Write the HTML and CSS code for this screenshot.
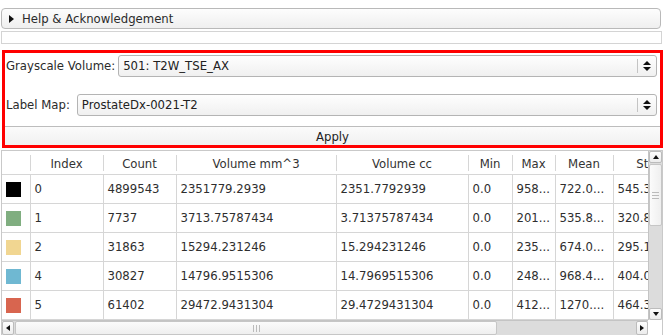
FILE: index.html
```html
<!DOCTYPE html>
<html lang="en">
<head>
    <meta charset="UTF-8">
    <title>Label Statistics</title>
    <link rel="stylesheet" href="styles.css">
</head>
<body>
    <div class="panel">
        <div class="collapsible">
            <span class="arrow-right"></span>
            <span>Help &amp; Acknowledgement</span>
        </div>
        <div class="empty-box"></div>

        <div class="red-box">
            <div class="form-row row-gray">
                <span class="label">Grayscale Volume:</span>
                <div class="combo">
                    <span class="combo-text">501: T2W_TSE_AX</span>
                    <span class="combo-arrows"><span class="up"></span><span class="down"></span></span>
                </div>
            </div>
            <div class="form-row row-label">
                <span class="label">Label Map:</span>
                <div class="combo">
                    <span class="combo-text">ProstateDx-0021-T2</span>
                    <span class="combo-arrows"><span class="up"></span><span class="down"></span></span>
                </div>
            </div>
            <button class="apply">Apply</button>
        </div>

        <div class="table-frame">
            <div class="viewport">
                <table class="stats">
                    <colgroup>
                        <col style="width:28px">
                        <col style="width:73px">
                        <col style="width:73px">
                        <col style="width:160px">
                        <col style="width:132px">
                        <col style="width:44px">
                        <col style="width:43px">
                        <col style="width:58px">
                        <col style="width:89px">
                    </colgroup>
                    <thead>
                        <tr>
                            <th></th>
                            <th>Index</th>
                            <th>Count</th>
                            <th>Volume mm^3</th>
                            <th>Volume cc</th>
                            <th>Min</th>
                            <th>Max</th>
                            <th>Mean</th>
                            <th>StdDev</th>
                        </tr>
                    </thead>
                    <tbody>
                        <tr>
                            <td><span class="swatch" style="background:#000000"></span></td>
                            <td>0</td><td>4899543</td><td>2351779.2939</td><td>2351.7792939</td>
                            <td>0.0</td><td>958...</td><td>722.0...</td><td>545.3...</td>
                        </tr>
                        <tr>
                            <td><span class="swatch" style="background:#80ae80"></span></td>
                            <td>1</td><td>7737</td><td>3713.75787434</td><td>3.71375787434</td>
                            <td>0.0</td><td>201...</td><td>535.8...</td><td>320.8...</td>
                        </tr>
                        <tr>
                            <td><span class="swatch" style="background:#f1d691"></span></td>
                            <td>2</td><td>31863</td><td>15294.231246</td><td>15.294231246</td>
                            <td>0.0</td><td>235...</td><td>674.0...</td><td>295.1...</td>
                        </tr>
                        <tr>
                            <td><span class="swatch" style="background:#6fb8d2"></span></td>
                            <td>4</td><td>30827</td><td>14796.9515306</td><td>14.7969515306</td>
                            <td>0.0</td><td>248...</td><td>968.4...</td><td>404.0...</td>
                        </tr>
                        <tr>
                            <td><span class="swatch" style="background:#d8654f"></span></td>
                            <td>5</td><td>61402</td><td>29472.9431304</td><td>29.4729431304</td>
                            <td>0.0</td><td>412...</td><td>1270....</td><td>464.3...</td>
                        </tr>
                    </tbody>
                </table>
            </div>
            <div class="vscroll">
                <span class="sb-btn"><span class="tri-up"></span></span>
                <span class="vhandle"><span class="grip-h"></span></span>
                <span class="vtrack"></span>
                <span class="sb-btn"><span class="tri-down"></span></span>
            </div>
            <div class="hscroll">
                <span class="sb-btn"><span class="tri-left"></span></span>
                <span class="hhandle"><span class="grip-v"></span></span>
                <span class="htrack"></span>
                <span class="sb-btn"><span class="tri-right"></span></span>
            </div>
            <div class="corner"></div>
        </div>
    </div>
</body>
</html>
```

FILE: styles.css
```css
body {
    margin: 0;
    background: #ffffff;
    font-family: "DejaVu Sans", sans-serif;
    font-size: 11.7px;
    color: #2b2b2b;
}

.panel {
    width: 670px;
    height: 335px;
    overflow: hidden;
}

.collapsible {
    margin: 8px 0 0 1px;
    width: 660px;
    height: 21px;
    border: 1px solid #b9b9b9;
    border-radius: 4px;
    background: linear-gradient(#fdfdfd, #efefef);
    display: flex;
    align-items: center;
    gap: 8px;
    padding-left: 7px;
    box-sizing: border-box;
}

.arrow-right {
    width: 0;
    height: 0;
    border-top: 4px solid transparent;
    border-bottom: 4px solid transparent;
    border-left: 5px solid #111;
}

.empty-box {
    margin: 2px 0 0 1px;
    width: 661px;
    height: 13px;
    border: 1px solid #d4d4d4;
    box-sizing: border-box;
}

.red-box {
    margin: 6px 0 0 2px;
    width: 661px;
    height: 98px;
    border: 3px solid #ff0000;
    box-sizing: border-box;
    display: flex;
    flex-direction: column;
}

.form-row {
    display: flex;
    align-items: center;
    padding-right: 3px;
}

.row-gray {
    margin-top: 2px;
    gap: 3px;
}

.row-label {
    margin-top: 17px;
    gap: 7px;
}

.label {
    padding-left: 1px;
    color: #2b2b2b;
}

.combo {
    flex: 1;
    height: 22px;
    border: 1px solid #b4b4b4;
    border-radius: 3px;
    background: linear-gradient(#fefefe, #f0f0f0);
    box-sizing: border-box;
    display: flex;
    align-items: center;
}

.combo-text {
    flex: 1;
    padding-left: 4px;
    color: #222;
}

.combo-arrows {
    width: 18px;
    height: 14px;
    border-left: 1px solid #c4c4c4;
    display: flex;
    flex-direction: column;
    align-items: center;
    justify-content: center;
    gap: 2px;
}

.combo-arrows .up {
    border-left: 4px solid transparent;
    border-right: 4px solid transparent;
    border-bottom: 4px solid #111;
}

.combo-arrows .down {
    border-left: 4px solid transparent;
    border-right: 4px solid transparent;
    border-top: 4px solid #111;
}

.apply {
    margin-top: auto;
    height: 19px;
    border: none;
    border-top: 1px solid #bdbdbd;
    background: linear-gradient(#fbfbfb, #f1f1f1);
    font-family: "DejaVu Sans", sans-serif;
    font-size: 11.7px;
    color: #222;
    padding: 2px 0 0 0;
}

.table-frame {
    margin: 2px 0 0 1px;
    width: 662px;
    height: 186px;
    border: 1px solid #c9c9c9;
    box-sizing: border-box;
    display: grid;
    grid-template-columns: 1fr 14px;
    grid-template-rows: 1fr 15px;
}

.viewport {
    overflow: hidden;
}

.stats {
    border-collapse: collapse;
    table-layout: fixed;
    width: 700px;
}

.stats th {
    height: 21px;
    padding: 2px 0 0 0;
    font-weight: normal;
    color: #333;
    text-align: center;
    background: #ffffff;
    border-bottom: 1px solid #d6d6d6;
    position: relative;
    white-space: nowrap;
}

.stats th + th::before {
    content: "";
    position: absolute;
    left: 0;
    top: 4px;
    bottom: 3px;
    border-left: 1px solid #d6d6d6;
}

.stats td {
    height: 28px;
    padding: 0 0 0 4px;
    border-right: 1px solid #d6d6d6;
    border-bottom: 1px solid #d6d6d6;
    white-space: nowrap;
    overflow: hidden;
    color: #2e2e2e;
}

.swatch {
    display: block;
    width: 15px;
    height: 15px;
}

.vscroll {
    display: flex;
    flex-direction: column;
    background: #dcdcdc;
    border-left: 1px solid #c4c4c4;
}

.hscroll {
    display: flex;
    background: #dcdcdc;
    border-top: 1px solid #c4c4c4;
}

.corner {
    background: #ffffff;
}

.sb-btn {
    flex: 0 0 12px;
    height: 12px;
    background: linear-gradient(#fdfdfd, #ececec);
    border: 1px solid #bcbcbc;
    border-radius: 2px;
    display: flex;
    align-items: center;
    justify-content: center;
    box-sizing: border-box;
}

.vscroll .sb-btn {
    width: 13px;
}

.hscroll .sb-btn {
    height: 14px;
}

.vhandle {
    height: 60px;
    margin-top: 1px;
    background: linear-gradient(90deg, #fbfbfb, #efefef);
    border: 1px solid #c6c6c6;
    border-radius: 2px;
    display: flex;
    align-items: center;
    justify-content: center;
}

.vtrack {
    flex: 1;
}

.hhandle {
    width: 480px;
    margin-left: 1px;
    background: linear-gradient(#fbfbfb, #efefef);
    border: 1px solid #c6c6c6;
    border-radius: 2px;
    display: flex;
    align-items: center;
    justify-content: center;
}

.htrack {
    flex: 1;
}

.grip-h {
    width: 7px;
    height: 5px;
    border-top: 1px solid #bbb;
    border-bottom: 1px solid #bbb;
    position: relative;
}

.grip-h::after {
    content: "";
    position: absolute;
    left: 0;
    right: 0;
    top: 2px;
    border-top: 1px solid #bbb;
}

.grip-v {
    width: 5px;
    height: 7px;
    border-left: 1px solid #bbb;
    border-right: 1px solid #bbb;
    position: relative;
}

.grip-v::after {
    content: "";
    position: absolute;
    top: 0;
    bottom: 0;
    left: 2px;
    border-left: 1px solid #bbb;
}

.tri-up {
    border-left: 3px solid transparent;
    border-right: 3px solid transparent;
    border-bottom: 4px solid #111;
}

.tri-down {
    border-left: 3px solid transparent;
    border-right: 3px solid transparent;
    border-top: 4px solid #111;
}

.tri-left {
    border-top: 3px solid transparent;
    border-bottom: 3px solid transparent;
    border-right: 4px solid #111;
}

.tri-right {
    border-top: 3px solid transparent;
    border-bottom: 3px solid transparent;
    border-left: 4px solid #111;
}
```
